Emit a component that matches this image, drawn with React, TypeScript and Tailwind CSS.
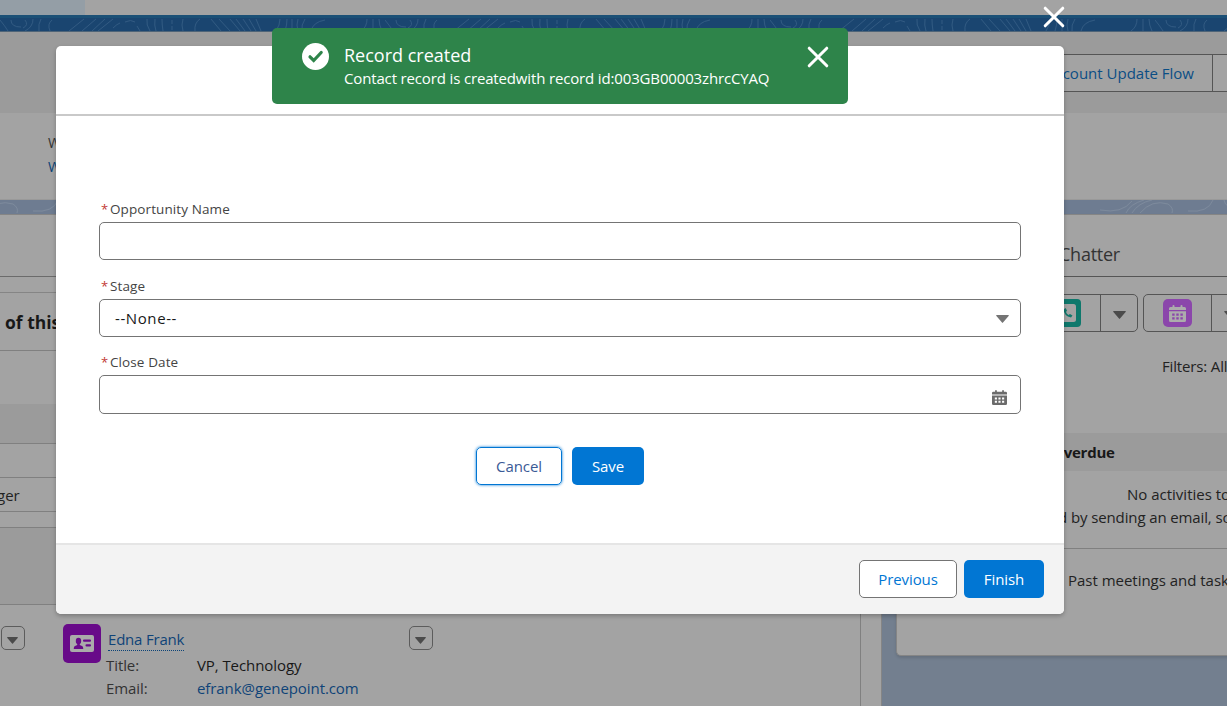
import React from "react";

const X = ({ className }: { className: string }) => (
  <svg className={className} viewBox="0 0 22 22" fill="none" stroke="#fff" strokeWidth="3" strokeLinecap="round">
    <path d="M2.200 2.200 19.800 19.800M19.800 2.200 2.200 19.800" />
  </svg>
);

const Caret = ({ className }: { className: string }) => (
  <svg className={className} viewBox="0 0 13 8">
    <path d="M.8 0h11.400c.6 0 .8.5.4.9L7 7.600c-.3.4-.7.4-1 0L.4.9C0 .5.2 0 .8 0z" fill="currentColor" />
  </svg>
);

const Calendar = ({ className }: { className: string }) => (
  <svg className={className} viewBox="0 0 17 17" fill="currentColor" fillRule="evenodd">
    <path d="M1.500 2h2V1q0-1 1-1t1 1v1h6V1q0-1 1-1t1 1v1h2Q17 2 17 3.500V5H0V3.500Q0 2 1.500 2z" />
    <path d="M0 6.300h17v9.200q0 1.500-1.500 1.500h-14Q0 17 0 15.500zM3.200 8.500v2.200h2.400V8.500zm4.100 0v2.200h2.400V8.500zm4.100 0v2.200h2.400V8.500zM3.200 12.300v2.200h2.400v-2.200zm4.100 0v2.200h2.400v-2.200zm4.100 0v2.200h2.400v-2.200z" />
  </svg>
);

const DARK_LINES =
  "M0 2q5 6 8 11M11 2q0 7 10 7M25 2q4 5-2 8M33 1q0 8-8 12M41 1q-3 5-2 12M52 2q-5 4-2 11M84 1 69 13M96 1 82 13M105 1 92 13M113 1 98 13M113 10q4-4 7-5M125 4q6-3 10 0M137 8l3 5M147 1q-1 6 3 12M155 1q-1 6 1 12M162 1q0 6 1 12M172 2v4M172 8v4M183 1q-2 6 0 12M200 1q-6 4-5 12M211 1l10 12M219 1l11 12M230 1l10 12M236 1l9 12M243 1l8 12M249 1l7 12M256 1l5 12M280 1q0 6-4 12M287 1q0 6-2 12M292 1v12M298 1q-2 6 0 12M305 1q-4 6-3 12M325 2q-12 2-14 11M367 1q0 8-6 12M373 1v12M379 1q0 6 3 12";

const LIGHT_LINES =
  "M0 12q12 1 11-12M28 13q2-12 16-12M62 12q-10 2-8-12M100 10q22 4 32-9M126 13q4-9 18-13M132 13q6-10 20-13M140 13q12-14 28-9 6 4 4 9M188 11q20 2 25-11M224 0q2 10 12 4M246 13q4-10 20-12";

const Contours = ({ id, lines, shift }: { id: string; lines: string; shift: number }) => (
  <svg className="block h-full w-full" fill="none" stroke="currentColor" strokeWidth="1">
    <defs>
      <pattern id={id} width="385" height="14" x={shift} patternUnits="userSpaceOnUse">
        <path d={lines} />
      </pattern>
    </defs>
    <rect width="100%" height="100%" fill={`url(#${id})`} stroke="none" />
  </svg>
);

const Field = ({ label, children, box }: { label: string; children?: React.ReactNode; box: string }) => (
  <div>
    <div className="flex h-[25px] items-start pl-[2px] text-[13.5px] leading-[24px] text-[#444]">
      <span className="w-[9px] text-[13px] text-[#c23934]">*</span>
      <span className="tracking-[0.1px] whitespace-nowrap">{label}</span>
    </div>
    <div className={`flex w-full items-center rounded-[5px] border border-[#747474] bg-white ${box}`}>{children}</div>
  </div>
);

const MenuButton = () => (
  <div className="flex h-6 w-6 shrink-0 items-center justify-center rounded-[5px] border border-[#5c5c5c] pt-1 pr-px text-[#4b4b4b]">
    <Caret className="h-[7px] w-[11px]" />
  </div>
);

const Backdrop = () => (
  <div className="flex h-full w-full flex-col overflow-hidden bg-[#737f8f]">
    <div className="flex h-[15px] shrink-0 bg-[#a3a3a3]">
      <div className="w-[85px] bg-[#949ea6]" />
    </div>
    <div className="h-[17px] shrink-0 border-t-[3px] border-b border-t-[#1b5076] border-b-[#4e6478] bg-[#1a4570] text-[#315a82]">
      <Contours id="contours-dark" lines={DARK_LINES} shift={0} />
    </div>
    <div className="flex h-[81px] shrink-0 justify-end bg-[#9b9b9b] pt-[22px]">
      <div className="flex h-[38px] w-[190px] justify-end border-y border-[#555] bg-[#a3a3a3]">
        <div className="flex items-center border-r border-[#555] pr-[18px] text-[15px] whitespace-nowrap text-[#0b4e85]">Account Update Flow</div>
        <div className="w-[14px]" />
      </div>
    </div>
    <div className="h-[87px] shrink-0 border-b border-[#999] bg-[#a3a3a3] pt-[18px] pl-12 text-[14px] leading-[23.5px]">
      <div className="text-[#333]">Website</div>
      <div className="text-[#0b4377]">Www.genepoint.com</div>
    </div>
    <div className="h-[14px] shrink-0 bg-[#6e7c91] text-[#7d8a9c]">
      <Contours id="contours-light" lines={LIGHT_LINES} shift={-155} />
    </div>
    <div className="flex min-h-0 flex-1">
      <div className="flex w-[882px] shrink-0 border-t border-r border-[#858585] bg-[#a3a3a3]">
        <div className="flex w-[861px] flex-col border-r border-[#808080]">
          <div className="h-[62px] shrink-0 border-b border-[#6b6b6b]" />
          <div className="h-4 shrink-0 border-b border-[#858585]" />
          <div className="flex h-[58px] shrink-0 items-center border-b border-[#808080] pt-px pl-[5px] text-[17.5px] font-bold text-[#181818]">of this record</div>
          <div className="h-[53px] shrink-0" />
          <div className="h-10 shrink-0 border-b border-[#808080] bg-[#9b9b9b]" />
          <div className="h-[34px] shrink-0 border-b border-[#808080]" />
          <div className="flex h-[34px] shrink-0 items-center border-b border-[#808080] pt-px text-[15px] text-[#222]">
            <span className="-ml-[3px]">ger</span>
          </div>
          <div className="h-4 shrink-0 border-b border-[#808080]" />
          <div className="h-[77px] shrink-0 border-b border-[#808080] bg-[#9b9b9b]" />
          <div className="flex pt-[21px] pl-px">
            <MenuButton />
            <div className="mt-[-2px] ml-[38px] flex h-[39px] w-[38px] shrink-0 items-center justify-center rounded-[5px] bg-[#680a89]">
              <svg className="h-[17px] w-6" viewBox="0 0 24 17">
                <rect width="24" height="17" rx="2" fill="#aaa" />
                <g fill="#680a89">
                  <ellipse cx="8.500" cy="6" rx="2.700" ry="3.300" />
                  <path d="M7.200 8h2.600v2l2.200 1q1.200.6 1.200 2v1H3.800v-1q0-1.400 1.200-2l2.200-1z" />
                  <rect x="13" y="4.500" width="8" height="2.300" rx="1" />
                  <rect x="15.500" y="9.300" width="5.500" height="2.300" rx="1" />
                </g>
              </svg>
            </div>
            <div className="mt-[2px] ml-[5px] w-[303px] text-[15px] leading-[23px] whitespace-nowrap text-[#333]">
              <div className="flex pl-[2px]">
                <span className="border-b border-dotted border-[#0b4377] leading-[22px] tracking-[-0.2px] text-[#0f4378]">Edna Frank</span>
              </div>
              <div className="mt-[3px] grid grid-cols-[91px_1fr] tracking-[-0.08px]">
                <span>Title:</span>
                <span className="text-[#181818]">VP, Technology</span>
                <span>Email:</span>
                <span className="text-[#0f4378]">efrank@genepoint.com</span>
                <span>Phone:</span>
              </div>
            </div>
            <MenuButton />
          </div>
        </div>
      </div>
      <div className="flex-1 pl-[14px]">
        <div className="flex h-[442px] w-[340px] flex-col rounded-b-[5px] border border-r-0 border-[#858585] bg-[#a3a3a3] shadow-[0_2px_3px_rgba(0,0,0,0.12)]">
          <div className="flex h-[62px] shrink-0 items-center border-b border-[#555] pt-[18px] pl-[162px] text-[18px] tracking-[-0.25px] text-[#333]">Chatter</div>
          <div className="flex h-[55px] shrink-0 gap-[5px] pt-[17px] pl-[130px]">
            <div className="flex h-[38px] w-[111px] shrink-0 rounded-[5px] border border-[#555]">
              <div className="flex w-[73px] items-start justify-end border-r border-[#555] pt-1 pr-[19px]">
                <div className="flex h-7 w-[29px] items-center justify-center rounded-[4px] bg-[#0e786c]">
                  <svg className="h-[18px] w-[18px]" viewBox="0 0 18 18">
                    <rect width="18" height="18" rx="2.500" fill="#a3a3a3" />
                    <path d="M5.500 5.500Q6 12 13 13.500l1.500-2-2.500-1.500-1.500 1Q8.500 10 8 8L9 6.500 7.500 4z" fill="#0e786c" />
                  </svg>
                </div>
              </div>
              <div className="flex flex-1 items-center justify-center pt-1 text-[#4b4b4b]">
                <Caret className="h-2 w-[13px]" />
              </div>
            </div>
            <div className="flex h-[38px] w-[111px] shrink-0 rounded-[5px] border border-[#555]">
              <div className="flex w-[68px] items-start border-r border-[#555] pt-1 pl-[19px]">
                <div className="flex h-7 w-[29px] items-center justify-center rounded-[5px] bg-[#8b46ab] text-[#acacac]">
                  <Calendar className="h-[17px] w-[17px]" />
                </div>
              </div>
              <div className="flex flex-1 items-center pt-1 pl-3 text-[#4b4b4b]">
                <Caret className="h-2 w-[13px]" />
              </div>
            </div>
          </div>
          <div className="flex h-[101px] shrink-0 pt-[23px] pl-[265px] text-[15px] tracking-[-0.15px] whitespace-nowrap text-[#222]">Filters: All time</div>
          <div className="flex h-[38px] shrink-0 items-center bg-[#9b9b9b] pl-[155px] text-[15px] font-bold tracking-[-0.25px] text-[#181818]">Overdue</div>
          <div className="h-[78px] shrink-0 border-b border-[#808080] pt-3 text-[15px] leading-[23px] whitespace-nowrap text-[#222]">
            <div className="pl-[230px]">No activities to show.</div>
            <div className="pl-[93px] tracking-[-0.12px]">Get started by sending an email, scheduling</div>
          </div>
          <div className="pt-5 pl-[171px] text-[15px] leading-[23px] tracking-[-0.02px] whitespace-nowrap text-[#222]">Past meetings and tasks</div>
        </div>
      </div>
    </div>
  </div>
);

const button = "flex h-[38px] items-center justify-center rounded-[5px] text-[15px] tracking-[-0.1px]";

export default function App() {
  return (
    <div className="relative h-[706px] w-full overflow-hidden font-['Open_Sans','Noto_Sans',sans-serif]">
      <Backdrop />

      <div className="absolute top-[46px] left-14 flex h-[568px] w-[1008px] flex-col overflow-hidden rounded-[5px] bg-white shadow-[0_2px_4px_rgba(0,0,0,0.25)]">
        <div className="h-[70px] shrink-0 border-b-2 border-[#c9c9c9]" />
        <div className="flex flex-1 flex-col px-[43px] pt-[81px]">
          <Field label="Opportunity Name" box="h-[38px]" />
          <div className="h-[14px]" />
          <Field label="Stage" box="h-[38px] justify-between pl-[15px] pr-[11px] text-[#181818]">
            <span className="text-[15px] tracking-[0.6px]">--None--</span>
            <Caret className="mt-[2px] h-2 w-[13px] text-[#747474]" />
          </Field>
          <div className="h-[13px]" />
          <Field label="Close Date" box="h-[39px] justify-end pr-[13px] text-[#6b6b6b]">
            <Calendar className="mt-[6px] h-[15px] w-[15px]" />
          </Field>
          <div className="mt-[33px] flex justify-center gap-[10px]">
            <button className={`${button} w-[86px] border border-[#0176d3] text-[#3a5a96] shadow-[0_0_3px_#0176d3]`}>Cancel</button>
            <button className={`${button} w-[72px] bg-[#0176d3] text-white`}>Save</button>
          </div>
        </div>
        <div className="flex h-[71px] shrink-0 justify-end gap-[7px] border-t-2 border-[#e5e5e5] bg-[#f3f3f3] pt-[15px] pr-5">
          <button className={`${button} w-[98px] border border-[#747474] bg-white text-[#0176d3]`}>Previous</button>
          <button className={`${button} w-20 bg-[#0176d3] text-white`}>Finish</button>
        </div>
      </div>

      <X className="absolute top-[6px] left-[1043px] h-[22px] w-[22px]" />

      <div className="absolute top-7 left-[272px] flex h-[76px] w-[576px] rounded-[5px] bg-[#2e844a] text-white">
        <svg className="mt-[15px] ml-[30px] h-[27px] w-[27px] shrink-0" viewBox="0 0 27 27">
          <circle cx="13.500" cy="13.500" r="13.500" fill="#fff" />
          <path d="m8 13.800 3.700 3.700 7.500-8" fill="none" stroke="#2e844a" strokeWidth="3.200" strokeLinecap="round" />
        </svg>
        <div className="mt-[15px] ml-[15px] w-[463px] whitespace-nowrap">
          <div className="text-[18px] leading-[25px]">Record created</div>
          <div className="text-[15px] leading-[21px] tracking-[-0.15px]">Contact record is createdwith record id:003GB00003zhrcCYAQ</div>
        </div>
        <X className="mt-[18px] h-[22px] w-[22px]" />
      </div>
    </div>
  );
}
